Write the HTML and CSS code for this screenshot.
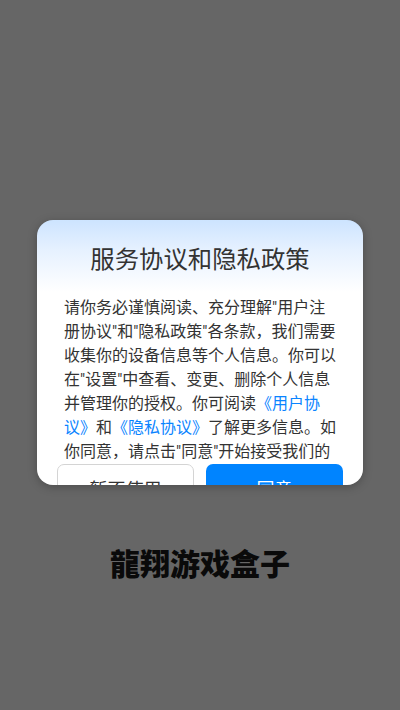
FILE: index.html
```html
<!DOCTYPE html>
<html lang="zh-CN">
<head>
<meta charset="utf-8">
<title>龍翔游戏盒子</title>
<link rel="stylesheet" href="styles.css">
</head>
<body>
<main class="screen">
  <section class="dialog">
    <h1 class="title">服务协议和隐私政策</h1>
    <p class="body">请你务必谨慎阅读、充分理解"用户注册协议"和"隐私政策"各条款，我们需要收集你的设备信息等个人信息。你可以在"设置"中查看、变更、删除个人信息并管理你的授权。你可阅读<a class="link">《用户协议》</a>和<a class="link">《隐私协议》</a>了解更多信息。如你同意，请点击"同意"开始接受我们的</p>
    <div class="actions">
      <button class="btn btn-cancel">暂不使用</button>
      <button class="btn btn-ok">同意</button>
    </div>
  </section>
  <div class="brand">龍翔游戏盒子</div>
</main>
</body>
</html>
```
FILE: styles.css
```css
html, body {
  margin: 0;
  height: 100%;
}
body {
  background: #666;
  font-family: "Roboto", "Noto Sans CJK SC", sans-serif;
}
.screen {
  height: 710px;
  box-sizing: border-box;
  padding-top: 220px;
  display: flex;
  flex-direction: column;
  align-items: center;
  overflow: hidden;
}
.dialog {
  width: 326px;
  height: 265px;
  box-sizing: border-box;
  border-radius: 16px;
  overflow: hidden;
  background: linear-gradient(180deg, #cde4ff 0, #e6f1ff 30px, #fff 72px);
  box-shadow: 0 2px 10px rgba(0, 0, 0, 0.25);
  flex: none;
}
.title {
  margin: 0;
  padding-top: 24px;
  font-size: 24.4px;
  line-height: 32px;
  font-weight: 400;
  color: #333;
  text-align: center;
  text-spacing-trim: space-all;
}
.body {
  margin: 0;
  padding: 20px 25px 0 27px;
  font-size: 16px;
  line-height: 24px;
  color: #333;
  text-spacing-trim: space-all;
}
.link {
  color: #0a84ff;
}
.actions {
  display: flex;
  justify-content: space-between;
  padding: 0 20px;
}
.btn {
  width: 137px;
  height: 48px;
  box-sizing: border-box;
  border-radius: 7px;
  font: inherit;
  font-size: 18px;
  padding: 0;
}
.btn-cancel {
  background: #fff;
  border: 1px solid #d4d4d4;
  color: #333;
}
.btn-ok {
  background: #0084ff;
  border: 0;
  color: #fff;
}
.brand {
  margin-top: 59px;
  font-size: 30px;
  line-height: 36px;
  font-weight: 900;
  color: #0a0a0a;
  font-family: "Noto Sans CJK TC", "Noto Sans CJK SC", sans-serif;
}
```
